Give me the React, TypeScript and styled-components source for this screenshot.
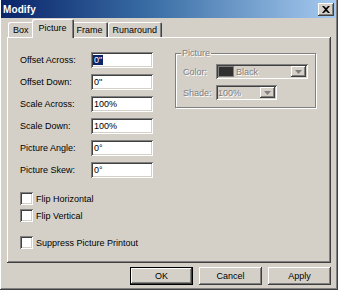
import * as React from 'react';
import styled, { createGlobalStyle, css } from 'styled-components';

const GlobalStyle = createGlobalStyle`
  html, body {
    margin: 0;
    padding: 0;
    background: #d4d0c8;
  }
  body {
    font-family: "Liberation Sans", Arial, sans-serif;
    font-size: 9px;
    color: #000;
  }
`;

// classic 3d edges
const raised = css`
  box-shadow: inset -1px -1px #404040, inset 1px 1px #ffffff,
    inset -2px -2px #808080, inset 2px 2px #d4d0c8;
`;
const sunken = css`
  box-shadow: inset 1px 1px #808080, inset -1px -1px #ffffff,
    inset 2px 2px #404040, inset -2px -2px #d4d0c8;
`;

const Window = styled.div`
  width: 338px;
  height: 290px;
  box-sizing: border-box;
  padding: 0 2px 2px 1px;
  background: #d4d0c8;
  box-shadow: inset -1px -1px #404040, inset 1px 0 #ffffff, inset -2px -2px #808080;
  display: flex;
  flex-direction: column;
`;

const TitleBar = styled.div`
  height: 18px;
  flex: none;
  background: linear-gradient(90deg, #0a246a 0%, #3a6ea5 45%, #a6caf0 100%);
  display: flex;
  align-items: center;
  justify-content: space-between;
  padding: 0 2px 0 2px;
`;

const Title = styled.span`
  color: #fff;
  font-weight: bold;
  font-size: 10px;
  letter-spacing: 0.1px;
`;

const CloseBtn = styled.div`
  width: 16px;
  height: 13px;
  background: #d4d0c8;
  ${raised};
  display: grid;
  place-items: center;
`;

const Body = styled.div`
  flex: 1;
  display: flex;
  flex-direction: column;
  padding: 2px 5px 0 6px;
`;

const TabStrip = styled.div`
  display: flex;
  align-items: flex-end;
  height: 17px;
  padding-left: 1px;
  position: relative;
  z-index: 1;
`;

const Tab = styled.div<{ $active?: boolean }>`
  box-sizing: border-box;
  height: ${(p) => (p.$active ? 19 : 15)}px;
  padding: 0 ${(p) => (p.$active ? 7 : 5)}px ${(p) => (p.$active ? 2 : 0)}px;
  margin: 0 ${(p) => (p.$active ? -2 : 0)}px ${(p) => (p.$active ? -1 : 0)}px;
  background: #d4d0c8;
  border-top-left-radius: 2px;
  border-top-right-radius: 2px;
  box-shadow: inset 1px 1px #ffffff, inset -1px 0 #404040, inset -2px 0 #808080;
  display: flex;
  align-items: center;
  white-space: nowrap;
  position: relative;
  z-index: ${(p) => (p.$active ? 2 : 0)};
`;

const Panel = styled.div`
  flex: 1;
  box-sizing: border-box;
  background: #d4d0c8;
  ${raised};
  display: flex;
  padding: 15px 0 0 13px;
`;

const LeftCol = styled.div`
  display: flex;
  flex-direction: column;
`;

const FieldRow = styled.div`
  display: flex;
  align-items: center;
  height: 16px;
  margin-bottom: 6px;
`;

const Label = styled.span<{ $w?: number; $disabled?: boolean }>`
  width: ${(p) => p.$w ?? 71}px;
  flex: none;
  ${(p) =>
    p.$disabled &&
    css`
      color: #808080;
      text-shadow: 1px 1px #ffffff;
    `}
`;

const Field = styled.div`
  width: 62px;
  height: 16px;
  box-sizing: border-box;
  background: #fff;
  ${sunken};
  padding: 0 3px;
  display: flex;
  align-items: center;
`;

const Selected = styled.span`
  background: #0a246a;
  color: #fff;
  padding: 0 1px;
  margin-left: -1px;
`;

const CheckRow = styled.div<{ $gap: number }>`
  display: flex;
  align-items: center;
  height: 13px;
  margin-top: ${(p) => p.$gap}px;
`;

const Check = styled.span`
  width: 13px;
  height: 13px;
  box-sizing: border-box;
  background: #fff;
  ${sunken};
  margin-right: 3px;
  flex: none;
`;

const Group = styled.div`
  margin: 1px 0 0 22px;
  width: 141px;
  height: 55px;
  box-sizing: border-box;
  border: 1px solid #808080;
  box-shadow: 1px 1px #ffffff, inset 1px 1px #ffffff;
  position: relative;
  padding: 10px 0 0 7px;
  display: flex;
  flex-direction: column;
  gap: 6px;
`;

const Legend = styled.span`
  position: absolute;
  top: -6px;
  left: 5px;
  padding: 0 1px;
  background: #d4d0c8;
  color: #808080;
  text-shadow: 1px 1px #ffffff;
`;

const GroupRow = styled.div`
  display: flex;
  align-items: center;
  height: 15px;
`;

const Select = styled.div<{ $w: number }>`
  width: ${(p) => p.$w}px;
  height: 15px;
  box-sizing: border-box;
  background: #d4d0c8;
  ${sunken};
  display: flex;
  align-items: center;
  padding: 2px;
  color: #808080;
  text-shadow: 1px 1px #ffffff;
`;

const Swatch = styled.span`
  width: 14px;
  height: 9px;
  background: #303030;
  border: 1px solid #808080;
  margin-right: 2px;
  flex: none;
`;

const SelectText = styled.span`
  flex: 1;
`;

const ArrowBtn = styled.span`
  width: 15px;
  height: 11px;
  flex: none;
  background: #d4d0c8;
  ${raised};
  display: grid;
  place-items: center;
`;

const Buttons = styled.div`
  display: flex;
  justify-content: flex-end;
  gap: 6px;
  padding: 4px 0 3px;
`;

const Button = styled.div<{ $default?: boolean }>`
  width: 63px;
  height: 18px;
  box-sizing: border-box;
  background: #d4d0c8;
  display: grid;
  place-items: center;
  ${(p) =>
    p.$default
      ? css`
          box-shadow: inset 0 0 0 1px #000, inset -2px -2px #404040, inset 2px 2px #ffffff,
            inset -3px -3px #808080;
        `
      : raised};
`;

const Arrow = () => (
  <svg width="7" height="4" viewBox="0 0 7 4">
    <path d="M0 0h7L3.5 4z" fill="#808080" />
  </svg>
);

const fields: [string, string][] = [
  ['Offset Across:', '0"'],
  ['Offset Down:', '0"'],
  ['Scale Across:', '100%'],
  ['Scale Down:', '100%'],
  ['Picture Angle:', '0°'],
  ['Picture Skew:', '0°'],
];

export default function App() {
  return (
    <>
      <GlobalStyle />
      <Window>
        <TitleBar>
          <Title>Modify</Title>
          <CloseBtn>
            <svg width="8" height="7" viewBox="0 0 8 7">
              <path d="M0 0h2l2 2 2-2h2L5 3.5 8 7H6L4 5 2 7H0l3-3.5z" fill="#000" />
            </svg>
          </CloseBtn>
        </TitleBar>
        <Body>
          <TabStrip>
            <Tab>Box</Tab>
            <Tab $active>Picture</Tab>
            <Tab>Frame</Tab>
            <Tab>Runaround</Tab>
          </TabStrip>
          <Panel>
            <LeftCol>
              {fields.map(([label, value], i) => (
                <FieldRow key={label}>
                  <Label>{label}</Label>
                  <Field>{i === 0 ? <Selected>{value}</Selected> : value}</Field>
                </FieldRow>
              ))}
              <CheckRow $gap={8}>
                <Check />
                Flip Horizontal
              </CheckRow>
              <CheckRow $gap={4}>
                <Check />
                Flip Vertical
              </CheckRow>
              <CheckRow $gap={14}>
                <Check />
                Suppress Picture Printout
              </CheckRow>
            </LeftCol>
            <div>
              <Group>
                <Legend>Picture</Legend>
                <GroupRow>
                  <Label $w={33} $disabled>Color:</Label>
                  <Select $w={92}>
                    <Swatch />
                    <SelectText>Black</SelectText>
                    <ArrowBtn>
                      <Arrow />
                    </ArrowBtn>
                  </Select>
                </GroupRow>
                <GroupRow>
                  <Label $w={33} $disabled>Shade:</Label>
                  <Select $w={61}>
                    <SelectText>100%</SelectText>
                    <ArrowBtn>
                      <Arrow />
                    </ArrowBtn>
                  </Select>
                </GroupRow>
              </Group>
            </div>
          </Panel>
          <Buttons>
            <Button $default>OK</Button>
            <Button>Cancel</Button>
            <Button>Apply</Button>
          </Buttons>
        </Body>
      </Window>
    </>
  );
}
